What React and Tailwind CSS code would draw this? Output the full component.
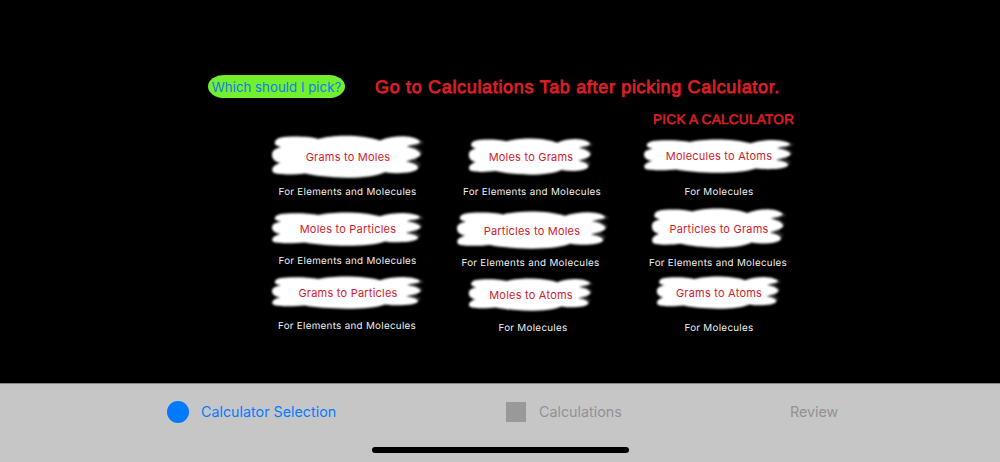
import React from 'react';
import clsx from 'clsx';

const columns = [
  {
    className: 'pt-[135px]',
    items: [
      { label: 'Grams to Moles',     note: 'For Elements and Molecules', size: 'w-[154px] h-[43px]', labelPos: '', noteGap: 'mt-[5px] mr-px' },
      { label: 'Moles to Particles', note: 'For Elements and Molecules', size: 'w-[154px] h-[34px] mt-[13px]', labelPos: '', noteGap: 'mt-[6px] mr-px' },
      { label: 'Grams to Particles', note: 'For Elements and Molecules', size: 'w-[154px] h-[33px] mt-[8px]', labelPos: '', noteGap: 'mt-[8px] mr-[2px]' },
    ],
  },
  {
    className: 'ml-[23px] pt-[138px]',
    items: [
      { label: 'Moles to Grams',     note: 'For Elements and Molecules', size: 'w-[126px] h-[37px]', labelPos: '', noteGap: 'mt-[8px] ml-[2px]' },
      { label: 'Particles to Moles', note: 'For Elements and Molecules', size: 'w-[154px] h-[38px] mt-[12px] translate-x-[2px]', labelPos: 'pt-px mr-[2px]', noteGap: 'mt-[5px] mr-px' },
      { label: 'Moles to Atoms',     note: 'For Molecules',              size: 'w-[126px] h-[33px] mt-[8px]', labelPos: '', noteGap: 'mt-[8px] translate-x-[2px]' },
    ],
  },
  {
    className: 'ml-[28px] pt-[139px]',
    items: [
      { label: 'Molecules to Atoms', note: 'For Molecules',              size: 'w-[152px] h-[34px]', labelPos: '', noteGap: 'mt-[10px]' },
      { label: 'Particles to Grams', note: 'For Elements and Molecules', size: 'w-[136px] h-[40px] mt-[9px]', labelPos: 'pt-px', noteGap: 'mt-[6px] mr-[2px]' },
      { label: 'Grams to Atoms',     note: 'For Molecules',              size: 'w-[126px] h-[33px] mt-[6px]', labelPos: '', noteGap: 'mt-[10px]' },
    ],
  },
];

// Brush stroke, stretched to the size of the button it sits in
function Brush() {
  return (
    <svg viewBox="-2 -2 464 133" preserveAspectRatio="none" className="col-start-1 row-start-1 w-full h-full blur-[0.8px]">
      <path
        fill="#262626"
        d="M400 14 C435 8 456 12 458 20 C462 27 440 30 434 35 C452 42 463 52 448 61 C436 68 434 74 438 79 C456 86 452 96 438 102 C425 111 408 114 390 108 Z"
      />
      <path
        fill="#ffffff"
        d="M10 20 C12 6 36 3 70 3 C100 3 122 5 140 10 C160 4 190 0 222 0 C262 0 300 5 326 15 C348 6 370 2 396 2 C424 3 444 10 448 20 C442 27 424 28 407 34 C430 38 448 47 449 59 C442 70 424 73 404 80 C428 84 444 92 441 102 C433 116 380 120 342 113 C316 125 276 130 226 130 C174 129 128 124 100 117 C70 121 20 122 5 114 C-1 107 -1 93 26 84 C8 80 1 71 1 58 C2 46 8 41 28 35 C14 32 7 28 10 20 Z"
      />
    </svg>
  );
}

function CalculatorButton({ label, note, size, labelPos, noteGap }) {
  return (
    <>
      <button className={clsx('grid shrink-0 items-center justify-items-center', size)}>
        <Brush />
        <span className={clsx('col-start-1 row-start-1 z-10 h-4 whitespace-nowrap text-[11px] leading-[17px] tracking-[0.22px] text-[#d5202b]', labelPos)}>
          {label}
        </span>
      </button>
      <p className={clsx('h-4 whitespace-nowrap text-[9.8px] leading-[19px] tracking-[0.3px] text-[#f0f0f0]', noteGap)}>{note}</p>
    </>
  );
}

export default function App() {
  return (
    <div className="flex h-[462px] w-[1000px] flex-col overflow-hidden bg-black font-['Inter',sans-serif] [text-rendering:geometricPrecision]">

      {/* Selection screen */}
      <main className="grid h-[383px] shrink-0">
        <header className="col-start-1 row-start-1 h-[130px] pl-[208px] pt-[75px]">
          <div className="flex h-[23px] items-center">
            <button className="h-[23px] w-[137px] shrink-0 whitespace-nowrap rounded-[17px/12px] bg-[#72ef2e] text-center text-[13.3px] leading-[24px] text-[#167ee0]">
              Which should I pick?
            </button>
            <h1 className="ml-[30px] pt-px whitespace-nowrap font-['Liberation_Sans',sans-serif] text-[18px] leading-6 tracking-[0.67px] text-[#dc1f26] [-webkit-text-stroke:0.8px_#dc1f26]">
              Go to Calculations Tab after picking Calculator.
            </h1>
          </div>
          <h2 className="ml-[445px] mt-[12px] whitespace-nowrap font-['Liberation_Sans',sans-serif] text-[13.6px] leading-[20px] tracking-[0.25px] text-[#dc1f26] [-webkit-text-stroke:0.6px_#dc1f26]">
            PICK A CALCULATOR
          </h2>
        </header>

        <section className="col-start-1 row-start-1 flex pl-[268px]">
          {columns.map((column, idx) => (
            <div key={idx} className={clsx('flex w-40 flex-col items-center', column.className)}>
              {column.items.map((item) => (
                <CalculatorButton key={item.label} {...item} />
              ))}
            </div>
          ))}
        </section>
      </main>

      {/* Tab bar */}
      <footer className="flex h-[79px] shrink-0 flex-col border-t border-[#858585] bg-[#c6c6c6]">
        <nav className="flex h-[55px] items-center pl-[167px] text-[14.3px] text-[#929292]">
          <button className="flex w-[339px] items-center gap-3 text-[#087bff]">
            <span className="size-[22px] rounded-full bg-[#007aff]" />
            Calculator Selection
          </button>
          <button className="flex w-[284px] items-center gap-[13px]">
            <span className="size-5 bg-[#999999]" />
            Calculations
          </button>
          <button>Review</button>
        </nav>
        <div className="mx-auto mt-[8px] h-[6px] w-[257px] rounded-full bg-black" />
      </footer>
    </div>
  );
}
